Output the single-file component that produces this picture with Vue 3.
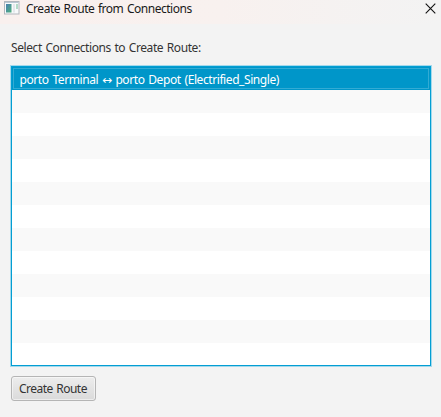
<script setup>
import { ref } from 'vue'

const connections = ref([{ from: 'porto Terminal', to: 'porto Depot (Electrified_Single)' }])
const selected = ref(0)
const rowCount = 13
</script>

<template>
  <div class="window">
    <header class="titlebar">
      <svg class="app-icon" width="16" height="14" viewBox="0 0 16 14">
        <defs>
          <linearGradient id="pane" x1="0" y1="0" x2="1" y2="1">
            <stop offset="0" stop-color="#4a80b0" />
            <stop offset="1" stop-color="#4fb07c" />
          </linearGradient>
        </defs>
        <rect x="0.5" y="0.5" width="14.5" height="12.5" fill="#f8fafb" stroke="#b3b7bd" />
        <rect x="1" y="1" width="13.5" height="1" fill="#b9c8d4" />
        <rect x="2" y="3" width="5.5" height="8.5" fill="url(#pane)" />
        <rect x="9" y="3" width="2" height="8.5" fill="#e4e8ec" />
        <rect x="12" y="3" width="2" height="5" fill="#b3dbc8" />
      </svg>
      <span class="title">Create Route from Connections</span>
      <svg class="close" width="11" height="11" viewBox="0 0 11 11">
        <path d="M0.7 0.7L10.3 10.3M10.3 0.7L0.7 10.3" stroke="#111" stroke-width="1.1" fill="none" />
      </svg>
    </header>
    <main class="content">
      <label class="prompt">Select Connections to Create Route:</label>
      <ul class="list">
        <li
          v-for="n in rowCount"
          :key="n"
          class="row"
          :class="{ selected: n - 1 === selected }"
          @click="connections[n - 1] && (selected = n - 1)"
        >
          <span v-if="connections[n - 1]" class="row-text">{{ connections[n - 1].from }} <span class="arrow">↔</span> {{ connections[n - 1].to }}</span>
        </li>
      </ul>
      <button class="create"><span class="create-text">Create Route</span></button>
    </main>
  </div>
</template>

<style>
body {
  background: #f3f3f3;
}
</style>

<style scoped>
.window {
  box-sizing: border-box;
  height: 417px;
  overflow: hidden;
  background: #f3f3f3;
  color: #333;
  font: 12px/16px "Noto Sans", "Open Sans", sans-serif;
}
.titlebar {
  box-sizing: border-box;
  display: flex;
  align-items: flex-start;
  height: 24px;
  padding: 1px 5px 0 4px;
  background: linear-gradient(90deg, #f9f0ee 0%, #f8f1ef 50%, #f3f3f3 100%);
  color: #1a1a1a;
}
.app-icon {
  flex: none;
}
.title {
  margin-left: 6px;
  white-space: nowrap;
  letter-spacing: -0.48px;
  word-spacing: 0.9px;
}
.close {
  margin: 2px 0 0 auto;
}
.content {
  display: flex;
  flex-direction: column;
  align-items: flex-start;
  padding: 16px 10px 0 11px;
}
.prompt {
  white-space: nowrap;
  letter-spacing: -0.42px;
  word-spacing: 0.9px;
}
.list {
  box-sizing: border-box;
  align-self: stretch;
  height: 300px;
  margin: 10px 0 0;
  padding: 0;
  overflow: hidden;
  list-style: none;
  background: #fff;
  border: 1px solid #039ed3;
  box-shadow: 0 0 0 1px #a3d9ec;
}
.row {
  box-sizing: border-box;
  height: 23px;
  padding: 5px 7px 0 7.5px;
  background: #fff;
}
.row:nth-child(even) {
  background: #f9f9f9;
}
.row.selected {
  color: #fff;
  background: #0096c9;
  outline: 1px solid #32abd4;
  outline-offset: -2px;
}
.row-text {
  display: block;
  white-space: nowrap;
  letter-spacing: -0.42px;
  word-spacing: 1.1px;
}
.arrow {
  font-family: "DejaVu Sans", sans-serif;
  font-size: 12px;
  line-height: 1;
}
.create {
  box-sizing: border-box;
  width: 85px;
  height: 25px;
  margin: 10px 0 0;
  padding: 0 7px;
  border: 1px solid #b5b5b5;
  border-radius: 3px;
  background: linear-gradient(#ededed, #dadada);
  box-shadow: inset 0 0 0 1px rgba(255, 255, 255, 0.5);
  color: #333;
  font: inherit;
  text-align: left;
}
.create-text {
  white-space: nowrap;
  letter-spacing: -0.52px;
  word-spacing: 0.9px;
}
</style>
